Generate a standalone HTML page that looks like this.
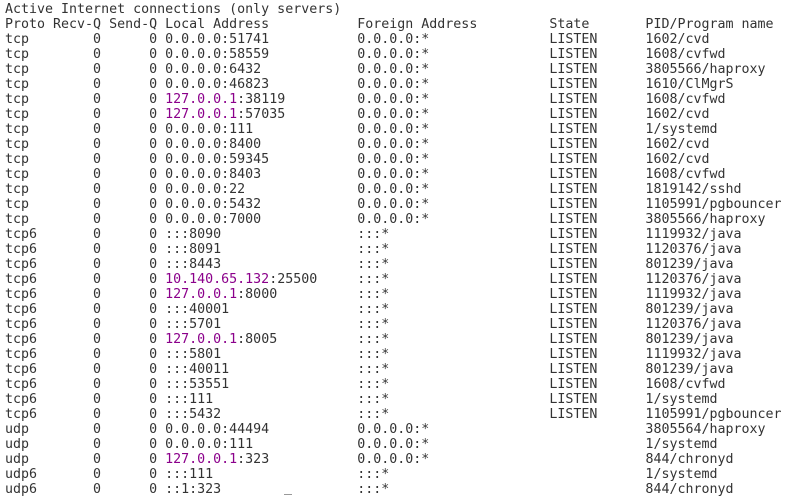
<!DOCTYPE html>
<html><head><meta charset="utf-8"><style>
html,body{margin:0;padding:0;background:#fff;width:790px;height:497px;overflow:hidden}
pre{margin:0;padding:2px 0 0 5px;font-family:"DejaVu Sans Mono","Liberation Mono",monospace;font-size:13.3px;line-height:15px;color:#333;position:relative;top:0}
.p{color:#8b008b}
.cur{position:absolute;left:284px;top:494px;width:8px;height:1px;background:#999}
</style></head><body>
<pre>Active Internet connections (only servers)
Proto Recv-Q Send-Q Local Address           Foreign Address         State       PID/Program name
tcp        0      0 0.0.0.0:51741           0.0.0.0:*               LISTEN      1602/cvd
tcp        0      0 0.0.0.0:58559           0.0.0.0:*               LISTEN      1608/cvfwd
tcp        0      0 0.0.0.0:6432            0.0.0.0:*               LISTEN      3805566/haproxy
tcp        0      0 0.0.0.0:46823           0.0.0.0:*               LISTEN      1610/ClMgrS
tcp        0      0 <span class="p">127.0.0.1</span>:38119         0.0.0.0:*               LISTEN      1608/cvfwd
tcp        0      0 <span class="p">127.0.0.1</span>:57035         0.0.0.0:*               LISTEN      1602/cvd
tcp        0      0 0.0.0.0:111             0.0.0.0:*               LISTEN      1/systemd
tcp        0      0 0.0.0.0:8400            0.0.0.0:*               LISTEN      1602/cvd
tcp        0      0 0.0.0.0:59345           0.0.0.0:*               LISTEN      1602/cvd
tcp        0      0 0.0.0.0:8403            0.0.0.0:*               LISTEN      1608/cvfwd
tcp        0      0 0.0.0.0:22              0.0.0.0:*               LISTEN      1819142/sshd
tcp        0      0 0.0.0.0:5432            0.0.0.0:*               LISTEN      1105991/pgbouncer
tcp        0      0 0.0.0.0:7000            0.0.0.0:*               LISTEN      3805566/haproxy
tcp6       0      0 :::8090                 :::*                    LISTEN      1119932/java
tcp6       0      0 :::8091                 :::*                    LISTEN      1120376/java
tcp6       0      0 :::8443                 :::*                    LISTEN      801239/java
tcp6       0      0 <span class="p">10.140.65.132</span>:25500     :::*                    LISTEN      1120376/java
tcp6       0      0 <span class="p">127.0.0.1</span>:8000          :::*                    LISTEN      1119932/java
tcp6       0      0 :::40001                :::*                    LISTEN      801239/java
tcp6       0      0 :::5701                 :::*                    LISTEN      1120376/java
tcp6       0      0 <span class="p">127.0.0.1</span>:8005          :::*                    LISTEN      801239/java
tcp6       0      0 :::5801                 :::*                    LISTEN      1119932/java
tcp6       0      0 :::40011                :::*                    LISTEN      801239/java
tcp6       0      0 :::53551                :::*                    LISTEN      1608/cvfwd
tcp6       0      0 :::111                  :::*                    LISTEN      1/systemd
tcp6       0      0 :::5432                 :::*                    LISTEN      1105991/pgbouncer
udp        0      0 0.0.0.0:44494           0.0.0.0:*                           3805564/haproxy
udp        0      0 0.0.0.0:111             0.0.0.0:*                           1/systemd
udp        0      0 <span class="p">127.0.0.1</span>:323           0.0.0.0:*                           844/chronyd
udp6       0      0 :::111                  :::*                                1/systemd
udp6       0      0 ::1:323                 :::*                                844/chronyd</pre>
<div class="cur"></div>
</body></html>
